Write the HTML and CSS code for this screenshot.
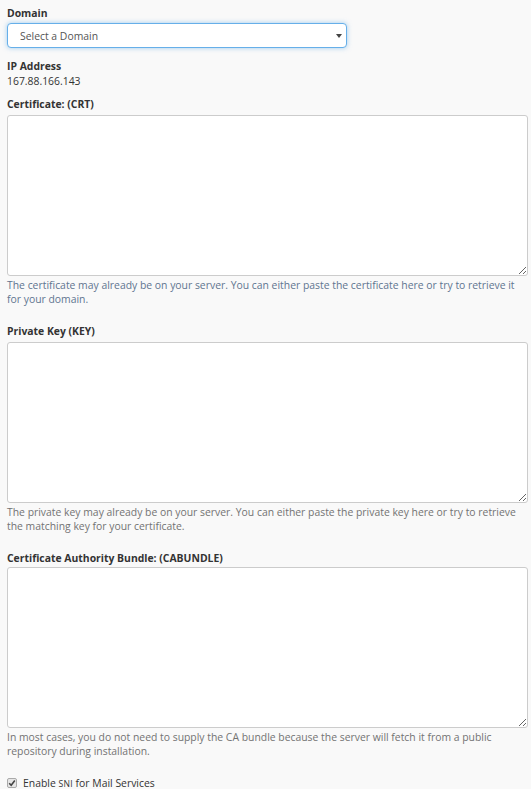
FILE: index.html
```html
<!DOCTYPE html>
<html lang="en">
<head>
<meta charset="UTF-8">
<meta name="viewport" content="width=device-width, initial-scale=1.0">
<title>Install an SSL Website</title>
<link rel="stylesheet" href="styles.css">
</head>
<body>
<form class="ssl-form">
  <div class="form-group domain-group">
    <label for="domain">Domain</label>
    <div class="select-wrap">
      <select id="domain" class="form-select">
        <option>Select a Domain</option>
      </select>
      <span class="caret"></span>
    </div>
  </div>

  <div class="form-group ip-group">
    <label>IP Address</label>
    <div class="ip-value">167.88.166.143</div>
  </div>

  <div class="form-group">
    <label for="crt">Certificate: (CRT)</label>
    <textarea id="crt" class="form-area"></textarea>
    <p class="help help-blue">The certificate may already be on your server. You can either paste the certificate here or try to retrieve it for your domain.</p>
  </div>

  <div class="form-group">
    <label for="key">Private Key (KEY)</label>
    <textarea id="key" class="form-area"></textarea>
    <p class="help">The private key may already be on your server. You can either paste the private key here or try to retrieve the matching key for your certificate.</p>
  </div>

  <div class="form-group cab-group">
    <label for="cab">Certificate Authority Bundle: (CABUNDLE)</label>
    <textarea id="cab" class="form-area"></textarea>
    <p class="help">In most cases, you do not need to supply the CA bundle because the server will fetch it from a public repository during installation.</p>
  </div>

  <div class="check-row">
    <span class="check-box">
      <svg width="8" height="8" viewBox="0 0 8 8"><path d="M1.2 4.2 L3.2 6.2 L6.8 1.6" fill="none" stroke="#444" stroke-width="1.6"/></svg>
    </span>
    <span class="check-text">Enable <abbr>SNI</abbr> for Mail Services</span>
  </div>
</form>
</body>
</html>
```

FILE: styles.css
```css
body {
  margin: 0;
  padding: 0;
  background-color: #f9f9f9;
  font-family: "Open Sans", Arial, sans-serif;
  font-size: 10.4px;
  line-height: 14px;
  color: #333;
}
.ssl-form {
  padding: 6px 3px 0 7px;
}
.form-group {
  margin-bottom: 18px;
}
.form-group label {
  display: block;
  font-weight: bold;
  margin-bottom: 4px;
}
.domain-group {
  margin-bottom: 11px;
}
.domain-group label {
  margin-bottom: 3px;
}
.ip-group {
  margin-bottom: 9px;
}
.ip-group label {
  margin-bottom: 1px;
}
.cab-group label {
  margin-bottom: 2px;
}
.select-wrap {
  position: relative;
  width: 340px;
}
.form-select {
  display: block;
  width: 340px;
  height: 25px;
  padding: 0 12px;
  border: 1px solid #66afe9;
  border-radius: 4px;
  box-shadow: 0 0 5px rgba(102, 175, 233, 0.6);
  background: #fff;
  font-family: "Open Sans", Arial, sans-serif;
  font-size: 10.4px;
  color: #555;
  -webkit-appearance: none;
  appearance: none;
  outline: none;
}
.caret {
  position: absolute;
  right: 5px;
  top: 11px;
  border-left: 3px solid transparent;
  border-right: 3px solid transparent;
  border-top: 4px solid #444;
}
.ip-value {
  color: #333;
}
.form-area {
  display: block;
  box-sizing: border-box;
  width: 521px;
  height: 161px;
  margin: 0;
  border: 1px solid #ccc;
  border-radius: 3px;
  background: #fff;
  font-family: "Open Sans", Arial, sans-serif;
  font-size: 10.4px;
}
.help {
  margin: 2px 0 0;
  color: #737373;
}
.help-blue {
  color: #5f7590;
}
.check-row {
  display: flex;
  align-items: center;
  gap: 6px;
  height: 14px;
  color: #333;
}
.check-box {
  display: flex;
  align-items: center;
  justify-content: center;
  width: 8px;
  height: 8px;
  border: 1px solid #aaa;
  border-radius: 2px;
  background: #e6e6e6;
}
.check-text abbr {
  font-size: 8.6px;
  text-decoration: none;
  letter-spacing: 0.3px;
}
```
